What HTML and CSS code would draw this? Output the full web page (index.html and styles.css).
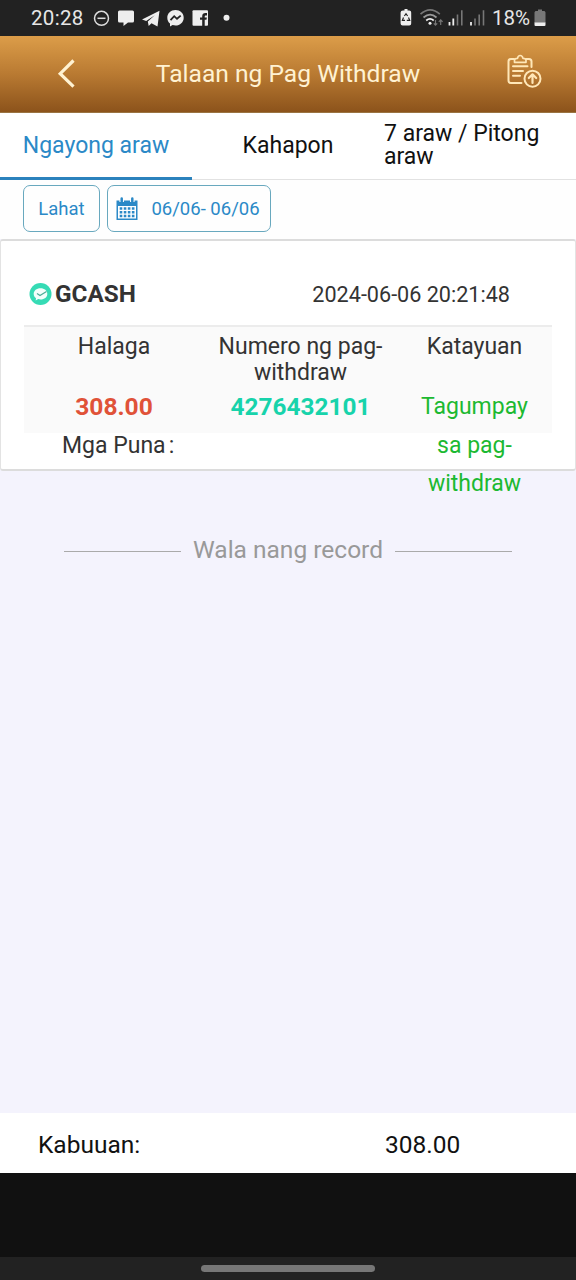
FILE: index.html
```html
<!DOCTYPE html>
<html lang="fil">
<head>
<meta charset="utf-8">
<title>Talaan ng Pag Withdraw</title>
<link rel="stylesheet" href="styles.css">
</head>
<body>
<div class="phone">
  <div class="status">
    <span class="status-time">20:28</span>
    <svg class="status-notices" width="144" height="36" viewBox="90 0 144 36" fill="#eee">
      <circle cx="101.500" cy="18.300" r="7" fill="none" stroke="#ddd" stroke-width="1.500"/>
      <path d="M97.500 18.300h8" stroke="#ddd" stroke-width="1.500"/>
      <path d="M119.500 10.500h13a1.500 1.500 0 0 1 1.500 1.500v9a1.500 1.500 0 0 1-1.500 1.500H128l-4.500 3.500v-3.500h-4a1.500 1.500 0 0 1-1.500-1.500v-9a1.500 1.500 0 0 1 1.500-1.500z"/>
      <path d="M142 19.500l17.500-8.800-2 15.800-6-3.200-2.800 2.800-.9-4.700 7-6.200-8.600 5.700z"/>
      <path d="M175.500 10c-4.600 0-8.200 3.300-8.200 7.700 0 2.500 1 4.500 2.700 5.900v2.800l2.600-1.300c.9.300 1.900.4 2.900.4 4.600 0 8.200-3.300 8.200-7.800S180.100 10 175.500 10z"/>
      <path d="M170.500 20.200l3.700-4 2.800 2.600 3.700-3.200" fill="none" stroke="#222" stroke-width="1.800"/>
      <rect x="192.500" y="10.300" width="15.500" height="15.500" rx="1"/>
      <path d="M202.200 26v-6.200H200v-2.400h2.200v-1.200c0-2 1.200-3.200 3.200-3.200h1.600v2.400h-1c-1 0-1.300.5-1.300 1.300v.7h2.200l-.4 2.400h-1.800V26z" fill="#222"/>
      <circle cx="226.500" cy="17.800" r="3"/>
    </svg>
    <svg class="status-signals" width="88" height="36" viewBox="398 0 88 36" fill="none">
      <path d="M402 10.500h1.500V9h3v1.500h1.700q2 0 2 2v11q0 2-2 2h-6.600q-2 0-2-2v-11q0-2 2.400-2z" fill="#eee"/>
      <path d="M403.400 16l1.600-2.300 1.600 2.300M402.500 17.500l-1.100 2.800h2.600M407.500 17.500l1.200 2.800h-2.900" stroke="#222" stroke-width="1.200"/>
      <path d="M419.500 14.200q9.700-8.600 19.300 0" stroke="#777" stroke-width="1.700"/>
      <path d="M422.500 17.500q6.700-5.700 13 0" stroke="#999" stroke-width="1.700"/>
      <path d="M425.200 20.500q3.800-3.300 7.500 0" stroke="#eee" stroke-width="1.700"/>
      <circle cx="429" cy="23.300" r="1.500" fill="#eee"/>
      <path d="M434.500 20v5M432.800 23.300l1.700 1.900 1.700-1.900M439.700 25v-5M437.800 21.800l1.900-2 1.900 2" stroke="#777" stroke-width="1.200"/>
      <path d="M448.500 22v3.500M452.300 18.500v7" stroke="#eee" stroke-width="1.800"/>
      <path d="M456.500 14.500v11M460.800 10.300v15.200M474 18.500v7M478.200 14.500v11M482.500 10.300v15.200" stroke="#777" stroke-width="1.600"/>
      <path d="M470 22v3.500" stroke="#eee" stroke-width="1.800"/>
    </svg>
    <span class="status-charge">18%</span>
    <svg class="status-battery" width="12" height="18" viewBox="0 0 12 18">
      <path d="M1.500 2H4V.5h4V2h2.500l1 1.200V14H.500V3.200z" fill="#777"/>
      <path d="M.5 13.500h11V16q0 1-1 1h-9q-1 0-1-1z" fill="#eee"/>
    </svg>
  </div>

  <header class="header">
    <svg class="header-back" width="24" height="34" viewBox="0 0 24 34" fill="none" stroke="#fff2d2" stroke-width="3.200"><path d="M19.500 3.500L6.200 16.700l13.300 13"/></svg>
    <h1 class="header-title">Talaan ng Pag Withdraw</h1>
    <svg class="header-record" width="38" height="38" viewBox="0 0 38 38" fill="none" stroke="#ffe7b8" stroke-width="2" stroke-linecap="round" stroke-linejoin="round">
      <path d="M9 5H6Q3.500 5 3.500 7.500v19Q3.500 29 6 29h10.500M21 5h3q2.500 0 2.500 2.500V13"/>
      <path d="M9.500 8.300V6.200q0-1.800 3-1.800Q13 1.500 15.200 1.500T18 4.400q3 0 3 1.800v2.100z" stroke-width="1.700"/>
      <path d="M8 12.300h14.500M8 17h10M8 21.700h7"/>
      <circle cx="27.500" cy="24.700" r="8"/>
      <path d="M27.500 29v-8.200M23.800 24l3.700-3.700 3.700 3.700" stroke-width="2.200"/>
    </svg>
  </header>

  <nav class="tabs">
    <div class="tab tab-active">Ngayong araw</div>
    <div class="tab">Kahapon</div>
    <div class="tab tab-week">7 araw / Pitong araw</div>
  </nav>

  <div class="filters">
    <div class="filter filter-all">Lahat</div>
    <div class="filter filter-date">
      <svg width="22" height="24" viewBox="0 0 22 24">
        <path d="M.5 3.500h21V23H.5z" fill="#2b89c7"/>
        <path d="M5.700 0v5M16.300 0v5" stroke="#fff" stroke-width="4.500"/>
        <path d="M5.700 1.500v3M16.300 1.500v3" stroke="#2b89c7" stroke-width="2.500" stroke-linecap="round"/>
        <path d="M2 9h18v12.500H2z" fill="#fff"/>
        <path d="M3.700 11.500h14.800M3.700 15.300h14.800M3.700 19.100h14.800" stroke="#2b89c7" stroke-width="2.500" stroke-dasharray="2.600 1.450"/>
      </svg>
      <span>06/06- 06/06</span>
    </div>
  </div>

  <section class="card">
    <div class="card-head">
      <svg class="gcash" width="24" height="24" viewBox="0 0 24 24">
        <circle cx="12.500" cy="12" r="11" fill="#36dbb5"/>
        <path d="M12.500 6.300c-4 0-6.800 2.400-6.800 5.600 0 1.900 1 3.300 2.300 4.200l-.3 2.300 2.500-1.300c4.900 1.200 9.100-1.400 9.100-5.200 0-3.200-2.800-5.600-6.800-5.600z" fill="#f4fffc"/>
        <path d="M9 11.500l3 2 6.500-4" fill="none" stroke="#4fae98" stroke-width="1.300"/>
      </svg>
      <strong class="method">GCASH</strong>
      <time class="stamp">2024-06-06 20:21:48</time>
    </div>
    <div class="details">
      <div class="label">Halaga</div>
      <div class="label">Numero ng pag-withdraw</div>
      <div class="label">Katayuan</div>
      <div class="value amount">308.00</div>
      <div class="value number">4276432101</div>
      <div class="value state">Tagumpay sa pag-withdraw</div>
    </div>
    <div class="remarks">Mga Puna<span class="colon">:</span></div>
  </section>

  <main class="list-end"><i class="rule"></i><span class="end-text">Wala nang record</span><i class="rule"></i></main>

  <footer class="total"><span class="total-label">Kabuuan:</span><span class="total-sum">308.00</span></footer>
  <div class="blank"></div>
  <div class="gesture"><div class="gesture-bar"></div></div>
</div>
</body>
</html>
```
FILE: styles.css
```css
* { box-sizing: border-box; }
body { margin: 0; font-family: Roboto, sans-serif; color: #333; }
svg { display: block; flex: none; }
.phone { width: 576px; height: 1280px; display: flex; flex-direction: column; background: #f4f3fd; overflow: hidden; }
.phone > * { flex: none; }

.status { height: 36px; background: #222; color: #e6e6e6; display: flex; align-items: center; padding: 0 30px 0 31px; font-size: 20.500px; }
.status-time { width: 59px; letter-spacing: .3px; }
.status-signals { margin-left: auto; }
.status-charge { width: 47px; padding-left: 5px; }
.status-battery { margin-left: 0; }

.header { height: 77px; display: flex; align-items: center; padding: 0 33px 0 54px; background: linear-gradient(#dc9d49, #b97a32 50%, #8c531b); border-bottom: 1px solid #9a7442; color: #fff2d2; }
.header-title { flex: 1; margin: 0; padding-right: 7px; text-align: center; font-size: 24.600px; font-weight: 400; line-height: 30px; }
.header-record { margin-top: -3px; }

.tabs { height: 67px; display: grid; grid-template-columns: repeat(3, 192px); background: #fff; border-bottom: 1px solid #e2e2e2; color: #111; font-size: 23px; line-height: 23px; }
.tab { height: 67px; display: flex; align-items: center; justify-content: center; padding-bottom: 3px; }
.tab-active { color: #2b89c7; border-bottom: 3px solid #2b82bd; padding-bottom: 0; }
.tab-week { justify-content: flex-start; padding-right: 20px; }

.filters { height: 59px; display: flex; gap: 7px; padding: 5px 23px 0; background: #fefefe; color: #2b89c7; }
.filter { height: 47px; display: flex; align-items: center; justify-content: center; border: 1px solid #68a8be; border-radius: 7px; font-size: 18.500px; }
.filter-all { width: 77px; }
.filter-date { width: 164px; gap: 13px; padding-right: 2px; }

.card { height: 232px; background: #fff; border: 1px solid #e3e3e3; border-top: 2px solid #dcdcdc; border-bottom: 2px solid #dcdcdc; border-radius: 3px; padding: 0 23px; }
.card-head { height: 86px; display: flex; align-items: center; padding: 22px 42px 0 4px; border-bottom: 2px solid #ececec; }
.method { margin-left: 3px; font-size: 24.300px; font-weight: 700; line-height: 28px; }
.stamp { margin-left: auto; font-size: 21.600px; }
.details { height: 106px; display: grid; grid-template-columns: 180px 193px 155px; grid-template-rows: 54px 38px; padding-top: 7px; background: #fafafa; text-align: center; font-size: 23px; }
.label { line-height: 26px; }
.value { line-height: 38.500px; }
.amount { color: #e05238; font-weight: 700; font-size: 24.600px; }
.number { color: #17d3ab; font-weight: 700; font-size: 24.400px; }
.state { color: #1cb931; padding: 0 20px; height: 116px; }
.remarks { width: 280px; margin-left: 38px; font-size: 23px; line-height: 25px; }
.colon { margin-left: 3px; }

.phone > .list-end { flex: 1; display: flex; justify-content: center; align-items: flex-start; gap: 12px; padding-top: 64px; color: #999; font-size: 24.500px; line-height: 30px; }
.rule { width: 117px; height: 1px; margin-top: 16px; background: #aaa; }

.total { height: 60px; display: flex; align-items: center; padding: 2px 0 0 38px; background: #fff; color: #111; font-size: 24.500px; }
.total-label { width: 347px; }
.blank { height: 84px; background: #111; }
.gesture { height: 23px; background: #222; padding: 8px 201px; }
.gesture-bar { height: 7px; border-radius: 4px; background: #777; }
```
